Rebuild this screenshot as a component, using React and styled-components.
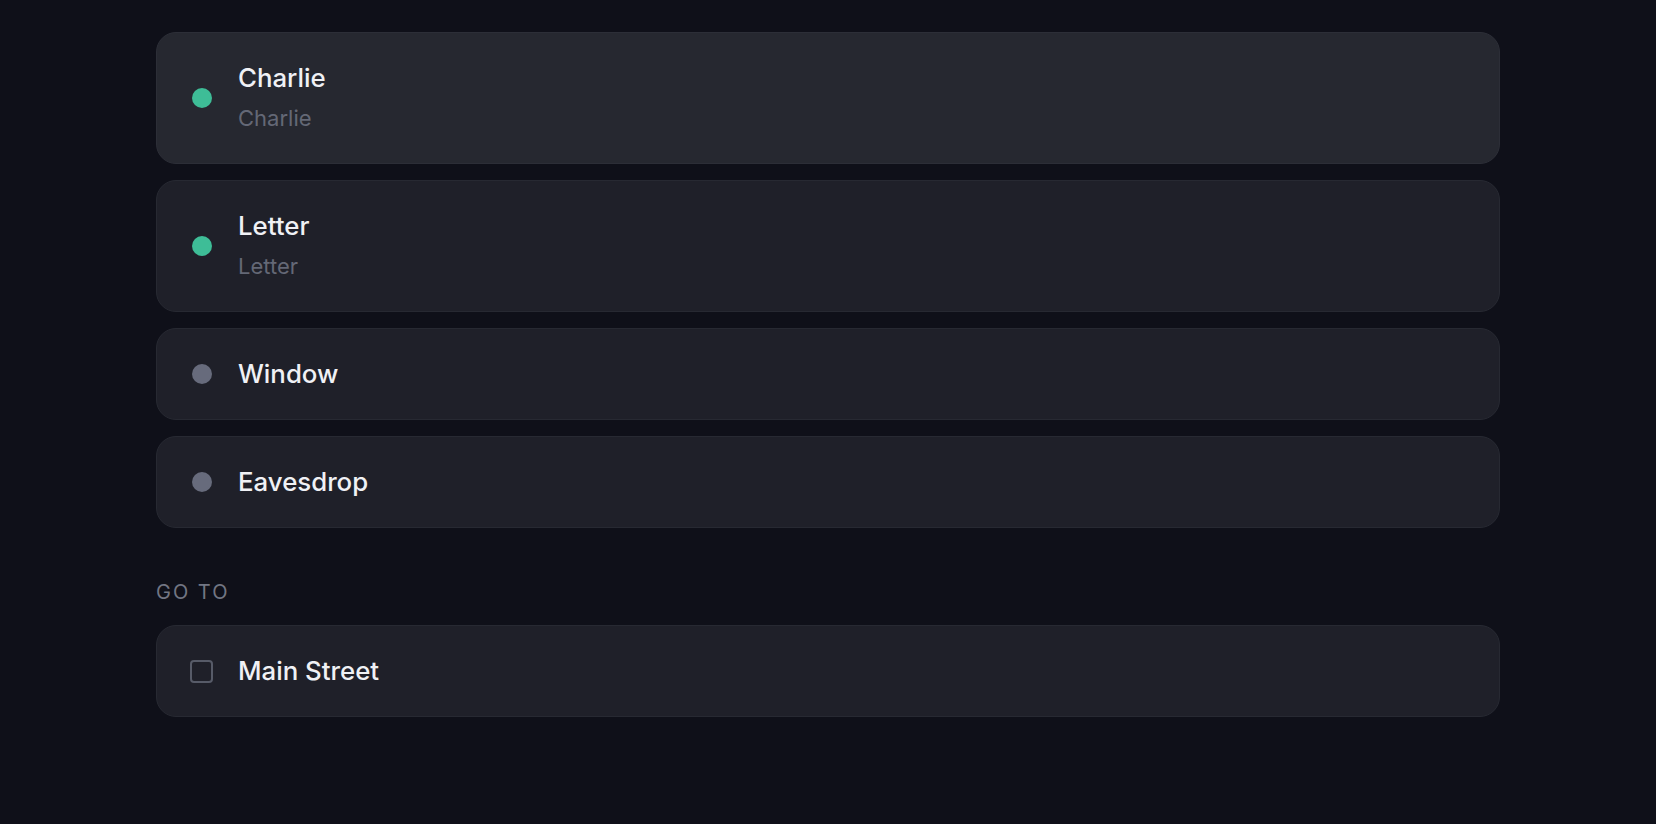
import React from "react";
import styled, { createGlobalStyle } from "styled-components";

const Global = createGlobalStyle`
  html, body { margin: 0; padding: 0; background: #0f1019; }
  body { font-family: Inter, "Noto Sans", sans-serif; -webkit-font-smoothing: antialiased; }
`;

const Page = styled.div`
  min-height: 824px;
  background: #0f1019;
  padding: 32px 156px 0 156px;
  box-sizing: border-box;
`;

const List = styled.div`
  display: flex;
  flex-direction: column;
  gap: 16px;
`;

const Card = styled.div`
  display: flex;
  align-items: center;
  gap: 26px;
  padding: 29px 36px 29px 35px;
  border: 1px solid ${(p) => (p.$active ? "#2c2e37" : "#272932")};
  border-radius: 20px;
  background: ${(p) => (p.$active ? "#262830" : "#1f2029")};
`;

const Dot = styled.span`
  flex: none;
  width: 20px;
  height: 20px;
  border-radius: 50%;
  background: ${(p) => (p.$on ? "#3ebd97" : "#676b7c")};
`;

const Check = styled.span`
  flex: none;
  box-sizing: border-box;
  width: 23px;
  height: 23px;
  margin-left: -2px;
  margin-right: -1px;
  border: 2px solid #575b68;
  border-radius: 4px;
`;

const Texts = styled.div`
  display: flex;
  flex-direction: column;
  gap: 8px;
`;

const Title = styled.div`
  font-size: 25.8px;
  line-height: 32px;
  font-weight: 550;
  color: #f0f1f5;
`;

const Sub = styled.div`
  font-size: 22px;
  line-height: 32px;
  font-weight: 400;
  color: #646876;
`;

const Section = styled.div`
  margin: 50px 0 19px;
  font-size: 20px;
  line-height: 28px;
  letter-spacing: 2px;
  color: #727683;
`;

const items = [
  { title: "Charlie", sub: "Charlie", on: true, active: true },
  { title: "Letter", sub: "Letter", on: true },
  { title: "Window", on: false },
  { title: "Eavesdrop", on: false },
];

export default function App() {
  return (
    <>
      <Global />
      <Page>
        <List>
          {items.map((it) => (
            <Card key={it.title} $active={it.active}>
              <Dot $on={it.on} />
              <Texts>
                <Title>{it.title}</Title>
                {it.sub && <Sub>{it.sub}</Sub>}
              </Texts>
            </Card>
          ))}
        </List>
        <Section>GO TO</Section>
        <List>
          <Card>
            <Check />
            <Texts>
              <Title>Main Street</Title>
            </Texts>
          </Card>
        </List>
      </Page>
    </>
  );
}
